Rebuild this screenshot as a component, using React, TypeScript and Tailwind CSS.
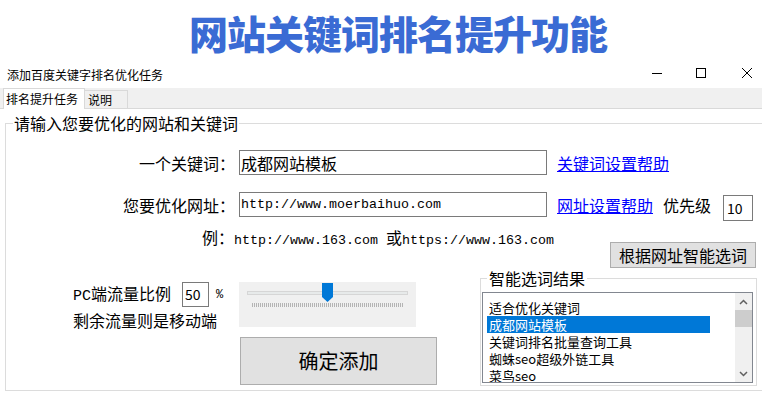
const mono = "font-['Liberation_Mono',monospace]";

const items = ["适合优化关键词", "成都网站模板", "关键词排名批量查询工具", "蜘蛛seo超级外链工具", "菜鸟seo"];

const App = () => {
  return (
    <div className="w-[762px] h-[397px] overflow-hidden bg-white text-black font-['Noto_Sans_CJK_SC',sans-serif]">
      {/* page heading */}
      <div className="h-[62px] flex items-center justify-center pl-[34px] pt-[2px]">
        <h1 className="text-[39px] leading-none font-black tracking-[-1px] text-[#3a6bd4]">网站关键词排名提升功能</h1>
      </div>

      {/* window title bar */}
      <div className="h-[26px] flex items-center pl-[7px]">
        <span className="text-[12px] leading-none">添加百度关键字排名优化任务</span>
        <div className="ml-auto flex items-start h-full pt-[6px] pr-[10px]">
          <svg width="10" height="10" viewBox="0 0 10 10">
            <line x1="0" y1="5.5" x2="10" y2="5.5" stroke="#000" strokeWidth="1" />
          </svg>
          <svg width="10" height="10" viewBox="0 0 10 10" className="ml-[34px]">
            <rect x="0.5" y="0.5" width="9" height="9" fill="none" stroke="#000" strokeWidth="1" />
          </svg>
          <svg width="10" height="10" viewBox="0 0 10 10" className="ml-[36px]">
            <path d="M0 0 L10 10 M10 0 L0 10" stroke="#000" strokeWidth="1" />
          </svg>
        </div>
      </div>

      {/* tabs */}
      <div className="h-[21px] flex items-end bg-[#f0f0f0] border-b border-[#d9d9d9]">
        <div className="ml-[3px] mb-[-1px] w-[82px] h-[21px] bg-white border-x border-t border-[#d9d9d9] flex items-center pl-[2px] text-[12px]">
          排名提升任务
        </div>
        <div className="w-[43px] h-[18px] bg-[#f0f0f0] border-r border-t border-[#d9d9d9] flex items-center pl-[3px] text-[12px]">
          说明
        </div>
      </div>

      {/* main group */}
      <fieldset className="ml-[5px] mt-[4px] w-[775px] min-w-0 border border-[#dcdcdc] pb-[4px]">
        <legend className="ml-[7px] px-[1px] text-[16px] leading-[20px]">请输入您要优化的网站和关键词</legend>

        <div className="mt-[17px] h-[25px] flex items-start text-[16px]">
          <div className="w-[229px] h-[25px] flex items-center justify-end">一个关键词：</div>
          <div className="ml-[4px] w-[308px] h-[25px] border border-[#7a7a7a] flex items-center pl-[1px]">成都网站模板</div>
          <a href="#" className="ml-[10px] h-[25px] flex items-center text-[#0000ff] underline">关键词设置帮助</a>
        </div>

        <div className="mt-[17px] h-[25px] flex items-start text-[16px]">
          <div className="w-[229px] h-[25px] flex items-center justify-end">您要优化网址：</div>
          <div className={`ml-[4px] w-[308px] h-[25px] border border-[#7a7a7a] flex items-center pl-[1px] text-[13.33px] ${mono}`}>
            http://www.moerbaihuo.com
          </div>
          <a href="#" className="ml-[10px] h-[25px] flex items-center text-[#0000ff] underline">网址设置帮助</a>
          <span className="ml-[10px] h-[25px] flex items-center">优先级</span>
          <div className="ml-[12px] mt-[3px] w-[30px] h-[26px] border border-[#7a7a7a] flex items-center pl-[3px] text-[14px]">10</div>
        </div>

        <div className="mt-[13px] h-[14px] pl-[196px] whitespace-pre text-[16px] leading-[14px]">
          例：<span className={`text-[13.33px] ${mono}`}>http://www.163.com </span>或<span className={`text-[13.33px] ${mono}`}>https://www.163.com</span>
        </div>

        <div className="mt-[-2px] h-[26px] flex">
          <button className="ml-[604px] w-[146px] h-[26px] bg-[#e1e1e1] border border-[#adadad] text-[16px] leading-none flex items-center justify-center">
            根据网址智能选词
          </button>
        </div>

        <div className="flex">
          <div className="w-[474px] flex flex-col">
            <div className="mt-[14px] flex">
              <div className="w-[233px] pl-[67px]">
                <div className="h-[25px] flex items-center text-[16px]">
                  <span className="leading-[20px]">
                    <span className={`text-[15px] ${mono}`}>PC</span>端流量比例
                  </span>
                  <div className="ml-[11px] w-[27px] h-[25px] border border-[#7a7a7a] flex items-center pl-[2px] text-[14px]">50</div>
                  <span className={`ml-[7px] text-[12px] ${mono}`}>%</span>
                </div>
                <div className="mt-[3px] h-[20px] flex items-center text-[16px]">剩余流量则是移动端</div>
              </div>
              <div className="w-[177px] h-[45px] bg-[#f0f0f0]">
                <svg width="177" height="45" viewBox="0 0 177 45">
                  <rect x="8.5" y="9.5" width="160" height="3" fill="#e7eaea" stroke="#d6d6d6" />
                  <line x1="13" y1="23" x2="165" y2="23" stroke="#b4b4b4" strokeWidth="4" strokeDasharray="1 1" />
                  <path d="M83 1 H94 V15 L88.5 20 L83 15 Z" fill="#0078d7" />
                </svg>
              </div>
            </div>
            <button className="mt-[7px] ml-[234px] w-[197px] h-[48px] bg-[#e1e1e1] border border-[#adadad] text-[20px] flex items-center justify-center">
              确定添加
            </button>
          </div>

          <fieldset className="w-[277px] min-w-0 border border-[#dcdcdc] pb-[2px]">
            <legend className="ml-[6px] px-[2px] text-[16px] leading-[20px]">智能选词结果</legend>
            <div className="mt-[4px] ml-[1px] w-[271px] h-[91px] border border-[#828790] bg-white flex overflow-hidden">
              <div className="w-[252px] pt-[6px] flex flex-col">
                {items.map((item, i) => (
                  <div
                    key={item}
                    className={`ml-[4px] w-[223px] h-[17px] shrink-0 flex items-center pl-[2px] text-[13px] leading-none ${i === 1 ? "bg-[#0078d7] text-white" : ""}`}
                  >
                    {item}
                  </div>
                ))}
              </div>
              <div className="ml-auto w-[17px] h-full bg-[#f0f0f0] flex flex-col">
                <div className="h-[17px] flex items-center justify-center">
                  <svg width="9" height="6" viewBox="0 0 9 6">
                    <path d="M1 5 L4.5 1.5 L8 5" fill="none" stroke="#606060" strokeWidth="1.5" />
                  </svg>
                </div>
                <div className="h-[17px] bg-[#cdcdcd]" />
                <div className="flex-1" />
                <div className="h-[17px] flex items-center justify-center">
                  <svg width="9" height="6" viewBox="0 0 9 6">
                    <path d="M1 1 L4.5 4.5 L8 1" fill="none" stroke="#606060" strokeWidth="1.5" />
                  </svg>
                </div>
              </div>
            </div>
          </fieldset>
        </div>
      </fieldset>
    </div>
  );
};

export default App;
